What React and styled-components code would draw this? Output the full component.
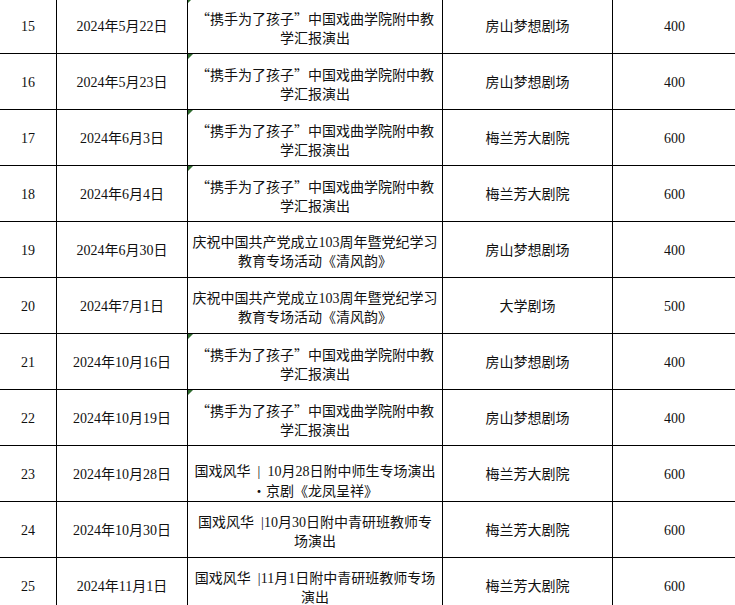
import styled, { createGlobalStyle } from "styled-components";

const GlobalStyle = createGlobalStyle`
  html, body {
    margin: 0;
    padding: 0;
    background: #ffffff;
  }
`;

const Sheet = styled.div`
  width: 735px;
  height: 605px;
  overflow: hidden;
  background: #ffffff;
`;

const Table = styled.table`
  border-collapse: collapse;
  table-layout: fixed;
  width: 737px;
  margin-top: -3px;
  margin-left: -1px;
  font-family: "Liberation Serif", "Noto Sans CJK SC", serif;
  font-size: 14px;
  color: #111111;
`;

const Row = styled.tr`
  height: 56px;
`;

const Cell = styled.td`
  border: 1px solid #000000;
  padding: 2px 0 0;
  text-align: center;
  vertical-align: middle;
  white-space: nowrap;
  line-height: 19px;
`;

const TitleCell = styled(Cell)`
  position: relative;
  padding: ${(p) => (p.$bottom ? "0" : "5px 0 0")};
  vertical-align: ${(p) => (p.$bottom ? "bottom" : "middle")};
`;

const Line = styled.div`
  line-height: 19px;
`;

// full-width punctuation slot, as the sheet's CJK font draws it
const Wide = styled.span`
  display: inline-block;
  width: 14px;
  text-align: ${(p) => p.$align || "center"};
  font-family: "Noto Sans CJK SC", sans-serif;
`;

const Flag = styled.span`
  position: absolute;
  top: 0;
  left: 0;
  width: 0;
  height: 0;
  border-top: 5px solid #2f6b2f;
  border-right: 5px solid transparent;
`;

const kids = [
  <>
    <Wide $align="right">“</Wide>携手为了孩子<Wide $align="left">”</Wide>中国戏曲学院附中教
  </>,
  "学汇报演出",
];
const party = ["庆祝中国共产党成立103周年暨党纪学习", "教育专场活动《清风韵》"];

const rows = [
  { no: 15, date: "2024年5月22日", title: kids, venue: "房山梦想剧场", count: 400, flag: true },
  { no: 16, date: "2024年5月23日", title: kids, venue: "房山梦想剧场", count: 400, flag: true },
  { no: 17, date: "2024年6月3日", title: kids, venue: "梅兰芳大剧院", count: 600, flag: true },
  { no: 18, date: "2024年6月4日", title: kids, venue: "梅兰芳大剧院", count: 600, flag: true },
  { no: 19, date: "2024年6月30日", title: party, venue: "房山梦想剧场", count: 400 },
  { no: 20, date: "2024年7月1日", title: party, venue: "大学剧场", count: 500 },
  { no: 21, date: "2024年10月16日", title: kids, venue: "房山梦想剧场", count: 400, flag: true },
  { no: 22, date: "2024年10月19日", title: kids, venue: "房山梦想剧场", count: 400, flag: true },
  {
    no: 23,
    date: "2024年10月28日",
    title: [
      "国戏风华\u2002|\u200210月28日附中师生专场演出",
      <>
        <Wide>·</Wide>京剧《龙凤呈祥》
      </>,
    ],
    venue: "梅兰芳大剧院",
    count: 600,
    bottom: true,
  },
  { no: 24, date: "2024年10月30日", title: ["国戏风华\u2002|10月30日附中青研班教师专", "场演出"], venue: "梅兰芳大剧院", count: 600 },
  { no: 25, date: "2024年11月1日", title: ["国戏风华\u2002|11月1日附中青研班教师专场", "演出"], venue: "梅兰芳大剧院", count: 600 },
];

const App = () => {
  return (
    <>
      <GlobalStyle />
      <Sheet>
        <Table>
          <colgroup>
            <col style={{ width: 57 }} />
            <col style={{ width: 131 }} />
            <col style={{ width: 255 }} />
            <col style={{ width: 170 }} />
            <col style={{ width: 124 }} />
          </colgroup>
          <tbody>
            {rows.map((r) => (
              <Row key={r.no}>
                <Cell>{r.no}</Cell>
                <Cell>{r.date}</Cell>
                <TitleCell $bottom={r.bottom}>
                  {r.flag && <Flag />}
                  {r.title.map((line, i) => (
                    <Line key={i}>{line}</Line>
                  ))}
                </TitleCell>
                <Cell>{r.venue}</Cell>
                <Cell>{r.count}</Cell>
              </Row>
            ))}
          </tbody>
        </Table>
      </Sheet>
    </>
  );
};

export default App;
